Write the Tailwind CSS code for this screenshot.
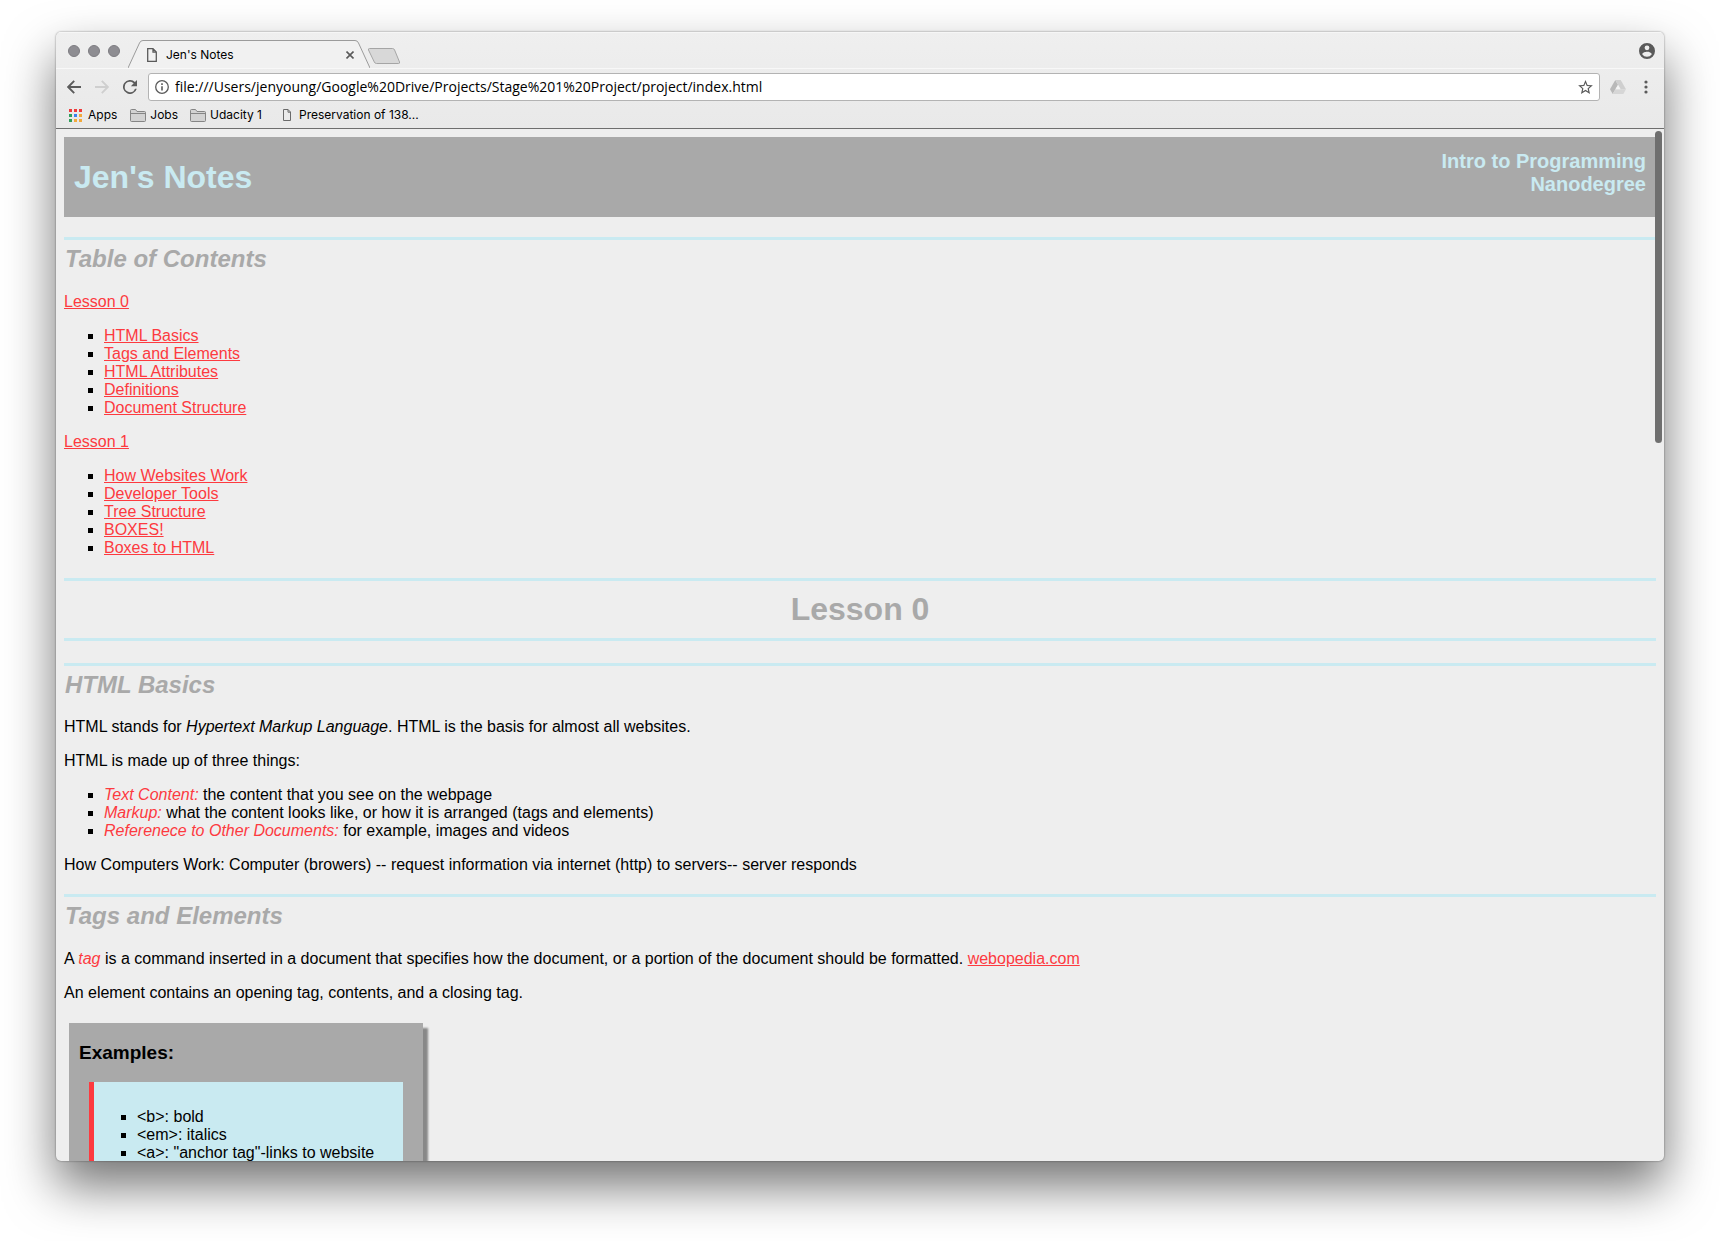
<!DOCTYPE html>
<html lang="en">
<head>
<meta charset="utf-8">
<meta name="viewport" content="width=device-width, initial-scale=1">
<title>Jen's Notes</title>
<script src="https://cdn.jsdelivr.net/npm/@tailwindcss/browser@4"></script>
</head>
<body class="bg-white">
<div class="h-screen flex flex-col px-14 pt-8 pb-20 overflow-hidden">
  <div class="flex-1 min-h-0 flex flex-col rounded-[5px] overflow-hidden bg-[#eeeeee] shadow-[0_25px_50px_rgba(0,0,0,0.55),0_0_2px_rgba(0,0,0,0.5)]">

    <!-- Browser chrome -->
    <div class="shrink-0 bg-linear-to-b from-[#efefef] to-[#e9e9e9] border-b border-[#6e6e6e] font-['Inter',sans-serif] text-black">
      <!-- Tab strip -->
      <div class="flex items-center h-9 pl-3 pr-[9px] border-t border-[#f6f6f6]">
        <div class="flex gap-2">
          <button aria-label="Close window" class="size-3 rounded-full bg-[#8e8d92] border border-[#7d7c81]"></button>
          <button aria-label="Minimize window" class="size-3 rounded-full bg-[#8e8d92] border border-[#7d7c81]"></button>
          <button aria-label="Zoom window" class="size-3 rounded-full bg-[#8e8d92] border border-[#7d7c81]"></button>
        </div>
        <div class="relative self-end ml-2 w-[242px] h-7">
          <svg class="absolute inset-0" width="242" height="28" viewBox="0 0 242 28" fill="#f1f1f1"><path d="M0 28 11.500 3Q12.500.5 15 .5H227Q229.500.5 230.500 3L242 28" stroke="#9b9b9b"/></svg>
          <div class="relative flex items-center h-full pl-[19px] pr-4 pt-[2px]">
            <svg width="10" height="14" viewBox="0 0 10 14" fill="none" stroke="#5a5a5a" stroke-width="1.300"><path d="M.7.7H6L9.300 4V13.300H.7ZM6 .7V4.200H9.300"/></svg>
            <span class="ml-[9px] text-[12px] leading-4 flex-1">Jen's Notes</span>
            <button aria-label="Close tab"><svg width="8" height="8" viewBox="0 0 8 8" stroke="#5a5a5a" stroke-width="1.600"><path d="M.5.5 7.500 7.500M7.500.5.5 7.500"/></svg></button>
          </div>
        </div>
        <button aria-label="New tab" class="self-end pb-[3px] -ml-[3px]"><svg width="34" height="18" viewBox="0 0 34 18" fill="#d8d8d8" stroke="#a5a5a5"><path d="M2.500 1.500H25.500Q27 1.500 27.600 3L32.500 15Q33 16.500 31.500 16.500H9.500Q8 16.500 7.300 15L1.500 3Q1 1.500 2.500 1.500Z"/></svg></button>
        <button aria-label="Profile" class="ml-auto"><svg width="16" height="16" viewBox="2 2 20 20" fill="#5a5a5a"><path d="M12 2a10 10 0 1 0 0 20 10 10 0 0 0 0-20Zm0 3a3 3 0 1 1 0 6 3 3 0 0 1 0-6Zm0 14.200a7.200 7.200 0 0 1-6-3.220c.03-1.990 4-3.080 6-3.080 1.990 0 5.970 1.090 6 3.080a7.200 7.200 0 0 1-6 3.220Z"/></svg></button>
      </div>
      <!-- Toolbar -->
      <div class="flex items-center h-[34px] pt-[3px] pl-[11px] pr-4 border-t border-[#f8f8f8]">
        <button aria-label="Back"><svg width="14" height="14" viewBox="0 0 14 14" fill="none" stroke="#5c5c5c" stroke-width="1.900"><path d="M14 7H1.500M7.200.8 1.200 7 7.200 13.200"/></svg></button>
        <button aria-label="Forward" class="ml-[14px]"><svg width="14" height="14" viewBox="0 0 14 14" fill="none" stroke="#cfcfcf" stroke-width="1.900"><path d="M0 7H12.500M6.800.8 12.800 7 6.800 13.200"/></svg></button>
        <button aria-label="Reload" class="ml-[14px]"><svg width="14" height="14" viewBox="4 4 16 16" fill="#5c5c5c"><path d="M17.650 6.350A8 8 0 1 0 19.730 14h-2.080A6 6 0 1 1 12 6c1.660 0 3.140.69 4.220 1.780L13 11h7V4Z"/></svg></button>
        <div class="flex flex-1 items-center h-7 ml-[11px] pl-[6px] pr-[6px] bg-white border border-[#b3b3b3] rounded-[3px]">
          <svg width="14" height="14" viewBox="0 0 14 14" fill="none" stroke="#5a5a5a"><circle cx="7" cy="7" r="6.300" stroke-width="1.300"/><path d="M7 6.200V10.600M7 3.300V5" stroke-width="1.600"/></svg>
          <input aria-label="Address" type="text" value="file:///Users/jenyoung/Google%20Drive/Projects/Stage%201%20Project/project/index.html" class="flex-1 min-w-0 ml-[6px] font-['Open_Sans',sans-serif] text-[14px] leading-5 outline-none bg-transparent">
          <button aria-label="Bookmark this page"><svg width="15" height="14" viewBox="2 2 20 19" fill="#5a5a5a"><path d="m22 9.240-7.190-.62L12 2 9.190 8.630 2 9.240l5.460 4.730L5.820 21 12 17.270 18.180 21l-1.630-7.030ZM12 15.400l-3.760 2.270 1-4.280-3.320-2.880 4.380-.38L12 6.100l1.710 4.040 4.380.38-3.320 2.880 1 4.280Z"/></svg></button>
        </div>
        <button aria-label="Google Drive extension" class="ml-[10px]"><svg width="16" height="14" viewBox="0 0 16 14"><path d="M5.300 0 0 9.300 2.700 14 8 4.700Z" fill="#b9b9b9"/><path d="M5.300 0H10.700L16 9.300H10.600Z" fill="#cfcfcf"/><path d="M5.400 9.300H16L13.300 14H2.700Z" fill="#d6d6d6"/><path d="M8 5 10.500 9.300H5.500Z" fill="#f4f4f4"/></svg></button>
        <button aria-label="Menu" class="ml-[18px]"><svg width="4" height="14" viewBox="0 0 4 14" fill="#5a5a5a"><circle cx="2" cy="2" r="1.600"/><circle cx="2" cy="7" r="1.600"/><circle cx="2" cy="12" r="1.600"/></svg></button>
      </div>
      <!-- Bookmarks bar -->
      <div class="flex items-center h-[26px] pl-[13px] text-[12px] leading-4">
        <a href="#" class="flex items-center gap-[6px]"><svg width="13" height="13" viewBox="0 0 13 13"><path d="M0 0h3v3H0zM5 0h3v3H5zM10 0h3v3h-3z" fill="#ee3b3b"/><path d="M0 5h3v3H0zM0 10h3v3H0z" fill="#2f9e5b"/><path d="M5 5h3v3H5z" fill="#3b82ee"/><path d="M10 5h3v3h-3zM5 10h3v3H5zM10 10h3v3h-3z" fill="#f2a93b"/></svg>Apps</a>
        <a href="#" class="flex items-center gap-1 ml-[13px]"><svg width="16" height="13" viewBox="0 0 16 13" fill="#d2d2d2" stroke="#858585"><path d="M.5 11.500V1.500Q.5.5 1.500.5H5.500L7 2.500H14.500Q15.500 2.500 15.500 3.500V11.500Q15.500 12.500 14.500 12.500H1.500Q.5 12.500.5 11.500Z"/><path d="M.5 4.500H15.500"/></svg>Jobs</a>
        <a href="#" class="flex items-center gap-1 ml-3"><svg width="16" height="13" viewBox="0 0 16 13" fill="#d2d2d2" stroke="#858585"><path d="M.5 11.500V1.500Q.5.5 1.500.5H5.500L7 2.500H14.500Q15.500 2.500 15.500 3.500V11.500Q15.500 12.500 14.500 12.500H1.500Q.5 12.500.5 11.500Z"/><path d="M.5 4.500H15.500"/></svg>Udacity 1</a>
        <a href="#" class="flex items-center gap-2 ml-[21px]"><svg width="8" height="12" viewBox="0 0 8 12" fill="none" stroke="#6a6a6a"><path d="M.5.5H5L7.500 3V11.500H.5ZM5 .5V3.200H7.500"/></svg>Preservation of 138...</a>
      </div>
    </div>

    <!-- Page -->
    <div class="relative flex-1 min-h-0 overflow-hidden">
      <main class="p-2 font-['Liberation_Sans',Arial,sans-serif] text-[16px] leading-[18px] text-black">
        <header class="flex justify-between items-start h-20 px-[10px] bg-[#a9a9a9] text-[#c9eaf1] font-bold">
          <h1 class="text-[32px] leading-[37px] mt-[22px]">Jen's Notes</h1>
          <p class="text-[20px] leading-[23px] mt-[13px] text-right">Intro to Programming<br>Nanodegree</p>
        </header>

        <section>
          <h2 class="my-5 border-t-3 border-[#c9eaf1] pt-1 pl-px text-[24px] leading-[29px] font-bold italic text-[#a9a9a9]">Table of Contents</h2>
          <p class="my-4"><a href="#lesson0" class="text-[#fd3a3f] underline">Lesson 0</a></p>
          <ul class="my-4 pl-10 list-[square]">
            <li><a href="#basics" class="text-[#fd3a3f] underline">HTML Basics</a></li>
            <li><a href="#tags" class="text-[#fd3a3f] underline">Tags and Elements</a></li>
            <li><a href="#attributes" class="text-[#fd3a3f] underline">HTML Attributes</a></li>
            <li><a href="#definitions" class="text-[#fd3a3f] underline">Definitions</a></li>
            <li><a href="#structure" class="text-[#fd3a3f] underline">Document Structure</a></li>
          </ul>
          <p class="my-4"><a href="#lesson1" class="text-[#fd3a3f] underline">Lesson 1</a></p>
          <ul class="my-4 pl-10 list-[square]">
            <li><a href="#websites" class="text-[#fd3a3f] underline">How Websites Work</a></li>
            <li><a href="#devtools" class="text-[#fd3a3f] underline">Developer Tools</a></li>
            <li><a href="#tree" class="text-[#fd3a3f] underline">Tree Structure</a></li>
            <li><a href="#boxes" class="text-[#fd3a3f] underline">BOXES!</a></li>
            <li><a href="#boxes-html" class="text-[#fd3a3f] underline">Boxes to HTML</a></li>
          </ul>
        </section>

        <h1 id="lesson0" class="my-[21px] border-y-3 border-[#c9eaf1] py-[10px] text-center text-[32px] leading-[37px] font-bold text-[#a9a9a9]">Lesson 0</h1>

        <section id="basics">
          <h2 class="mt-[22px] mb-[19px] border-t-3 border-[#c9eaf1] pt-1 pl-px text-[24px] leading-[29px] font-bold italic text-[#a9a9a9]">HTML Basics</h2>
          <p class="my-4">HTML stands for <em>Hypertext Markup Language</em>. HTML is the basis for almost all websites.</p>
          <p class="my-4">HTML is made up of three things:</p>
          <ul class="my-4 pl-10 list-[square]">
            <li><em class="text-[#fd3a3f]">Text Content:</em> the content that you see on the webpage</li>
            <li><em class="text-[#fd3a3f]">Markup:</em> what the content looks like, or how it is arranged (tags and elements)</li>
            <li><em class="text-[#fd3a3f]">Referenece to Other Documents:</em> for example, images and videos</li>
          </ul>
          <p class="my-4">How Computers Work: Computer (browers) -- request information via internet (http) to servers-- server responds</p>
        </section>

        <section id="tags">
          <h2 class="my-5 border-t-3 border-[#c9eaf1] pt-1 pl-px text-[24px] leading-[29px] font-bold italic text-[#a9a9a9]">Tags and Elements</h2>
          <p class="my-4">A <em class="text-[#fd3a3f]">tag</em> is a command inserted in a document that specifies how the document, or a portion of the document should be formatted. <a href="#" class="text-[#fd3a3f] underline">webopedia.com</a></p>
          <p class="my-4">An element contains an opening tag, contents, and a closing tag.</p>
          <div class="w-[354px] mt-[21px] ml-[5px] px-[10px] pt-[19px] pb-5 bg-[#a9a9a9] shadow-[5px_5px_2px_#888888]">
            <h3 class="text-[19px] leading-[21px] font-bold">Examples:</h3>
            <div class="mt-[19px] mx-[10px] border-l-5 border-[#fd3a3f] bg-[#c9eaf1] py-[26px] pl-[3px]">
              <ul class="pl-10 list-[square]">
                <li>&lt;b&gt;: bold</li>
                <li>&lt;em&gt;: italics</li>
                <li>&lt;a&gt;: "anchor tag"-links to website</li>
              </ul>
            </div>
          </div>
        </section>
      </main>
      <div class="absolute top-[2px] right-[2px] w-[7px] h-[312px] rounded-full bg-[#6f6f6f]"></div>
    </div>
  </div>
</div>
</body>
</html>
